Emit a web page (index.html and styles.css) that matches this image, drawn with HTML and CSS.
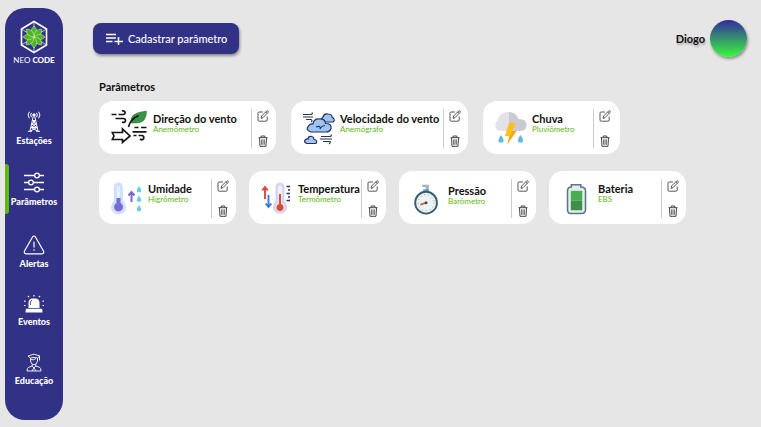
FILE: index.html
```html
<!DOCTYPE html>
<html lang="pt-BR">
<head>
<meta charset="utf-8">
<meta name="viewport" content="width=device-width, initial-scale=1">
<title>Neo Code - Parâmetros</title>
<link rel="stylesheet" href="styles.css">
</head>
<body>
<svg class="sprite" aria-hidden="true">
  <symbol id="edit" viewBox="0 0 12 12">
    <path d="M6 2H2.200Q1 2 1 3.200V10Q1 11.200 2.200 11.200H9Q10.200 11.200 10.200 10V6.500M4 8.400L4.600 6L9.600 1Q10.300.4 11 1.100Q11.700 1.800 11 2.500L6.100 7.600ZM8.700 1.900L10.200 3.400" fill="none" stroke="currentColor" stroke-width=".9"/>
  </symbol>
  <symbol id="trash" viewBox="0 0 12 12">
    <path d="M1.500 2.700H10.500M4.200 2.500V1H7.800V2.500M2.500 3L3 11.300H9L9.500 3" fill="none" stroke="currentColor" stroke-width="1"/>
    <path d="M4.600 4.400V9.800M6 4.400V9.800M7.400 4.400V9.800" stroke="currentColor" stroke-width=".8"/>
  </symbol>
</svg>
<div class="app">
  <aside class="sidebar">
    <a class="brand" href="#">
      <svg width="30" height="34" viewBox="0 0 30 34" aria-hidden="true">
        <path d="M15 1.500L27.500 9V25L15 32.500L2.500 25V9Z" fill="none" stroke="#fff" stroke-width="1.600"/>
        <path d="M15 2V32M2.500 9L27.500 25M27.500 9L2.500 25" stroke="#fff" stroke-width=".7"/>
        <g fill="#4fb51c" stroke="#e4f5dc" stroke-width=".5">
          <path id="petal" d="M15 17Q9.500 11 15 6Q20.500 11 15 17Z"/>
          <use href="#petal" transform="rotate(45 15 17)"/>
          <use href="#petal" transform="rotate(90 15 17)"/>
          <use href="#petal" transform="rotate(135 15 17)"/>
          <use href="#petal" transform="rotate(180 15 17)"/>
          <use href="#petal" transform="rotate(225 15 17)"/>
          <use href="#petal" transform="rotate(270 15 17)"/>
          <use href="#petal" transform="rotate(315 15 17)"/>
        </g>
      </svg>
      <span class="brand-name">NEO <b>CODE</b></span>
    </a>
    <nav class="menu">
      <a class="menu-item" href="#">
        <svg width="16" height="21" viewBox="0 0 16 21" fill="none" stroke="#fff" aria-hidden="true">
          <circle cx="8" cy="4" r="1.200" fill="#fff"/>
          <path d="M5.500 6.200Q3.800 4 5.500 1.800M10.500 6.200Q12.200 4 10.500 1.800M3.400 7.300Q.7 4 3.400.7M12.600 7.300Q15.300 4 12.600.7" stroke-width="1"/>
          <path d="M7.200 5.500L4 20M8.800 5.500L12 20M2 20.300H6M10 20.300H14M6.500 9.500H9.500M5.800 13H10.200M5 16.500H11M6.500 9.500L10.200 13L5 16.500L11.500 20M9.500 9.500L5.800 13L11 16.500L4.500 20" stroke-width="1"/>
        </svg>
        <span>Estações</span>
      </a>
      <a class="menu-item active" href="#" aria-current="page">
        <svg width="22" height="21" viewBox="0 0 22 21" fill="none" stroke="#fff" stroke-width="1.300" aria-hidden="true">
          <path d="M1 3.500H11.500M16.500 3.500H21M1 10.500H5.500M10.500 10.500H21M1 17.500H11.500M16.500 17.500H21"/>
          <circle cx="14" cy="3.500" r="2.400"/><circle cx="8" cy="10.500" r="2.400"/><circle cx="14" cy="17.500" r="2.400"/>
        </svg>
        <span>Parâmetros</span>
      </a>
      <a class="menu-item" href="#">
        <svg width="22" height="22" viewBox="0 0 22 22" fill="none" stroke="#fff" stroke-width="1.200" stroke-linejoin="round" aria-hidden="true">
          <path d="M9.400 4.200Q11 1.800 12.600 4.200L20.500 18Q21.400 20.600 18.800 20.800H3.200Q.6 20.600 1.500 18Z"/>
          <path d="M11 8.800V14.500M11 16.300V17.700"/>
        </svg>
        <span>Alertas</span>
      </a>
      <a class="menu-item" href="#">
        <svg width="22" height="18" viewBox="0 0 22 18" aria-hidden="true">
          <path d="M5.500 13V7.500Q6 3.500 9.500 3.500H12.500Q16 3.500 16.500 7.500V13ZM3.500 13.800H18.500Q19.500 14 19.500 17.500H2.500Q2.500 14 3.500 13.800Z" fill="#fff"/>
          <path d="M7.500 10V7.500Q7.500 5.500 9 5.300" fill="none" stroke="#313186" stroke-width=".8"/>
          <path d="M11 0V1.500M5 1L6 2.200M17 1L16 2.200M1 6L2.500 6.400M21 6L19.500 6.400M1 10.500H2.500M19.500 10.500H21" stroke="#fff" stroke-width="1.200"/>
        </svg>
        <span>Eventos</span>
      </a>
      <a class="menu-item" href="#">
        <svg width="16" height="19" viewBox="0 0 16 19" fill="none" stroke="#fff" stroke-width=".9" aria-hidden="true">
          <path d="M2 3L8 1.200L14 3L11.500 5Q8 3.800 4.500 5ZM13.500 3V7.500M4.500 5V8Q5 11.500 8 11.800Q11 11.500 11.500 8V5M4.500 6.500Q8 7.500 10 5.500M6.200 11.300V13L8 15L9.800 13V11.300M6.200 13L2.500 14.300Q1 15 1 18H15Q15 15 13.500 14.300L9.800 13M6 18L8 15L10 18"/>
        </svg>
        <span>Educação</span>
      </a>
    </nav>
  </aside>

  <main class="content">
    <header class="topbar">
      <button class="add" type="button">
        <svg width="17" height="13" viewBox="0 0 17 13" fill="none" stroke="#fff" stroke-width="1.500" aria-hidden="true">
          <path d="M0 2.500H10M0 6H10M0 9.500H6.500M12.500 5V13M8.500 9.500H17"/>
        </svg>
        Cadastrar parâmetro
      </button>
      <div class="user"><span>Diogo</span><div class="avatar"></div></div>
    </header>

    <section class="params">
      <h1>Parâmetros</h1>
      <div class="row row-wide">
        <article class="card wide">
          <svg class="art art-wide" viewBox="0 0 36 36" fill="none" stroke="#151515" stroke-width="1.700" aria-hidden="true">
            <path d="M0 5.500H5M7 5.500H12Q14 5 13.500 3Q12.500 1.200 10.500 2M4 9.500H12Q14.500 10 13.800 12.500Q12.500 14 10.500 13"/>
            <path d="M20 14Q16.500 4 35 2Q35 14 25 14Z" fill="#369442" stroke="#27733a" stroke-width=".5"/>
            <path d="M17 18Q19 10 27 6.500"/>
            <path d="M.8 23.500H11V20L18.500 27L11 33.500V30.500H.8L2.500 27Z"/>
            <path d="M23 18.500H27M29.500 18.500H35M21 22.800H35M22 26.500H25M27 26.500H30.500Q33 27 32 30Q30.500 31.500 28.500 30"/>
          </svg>
          <div class="info"><h2>Direção do vento</h2><p>Anemômetro</p></div>
          <div class="actions">
            <button type="button" aria-label="Editar Direção do vento"><svg><use href="#edit"/></svg></button>
            <button type="button" aria-label="Excluir Direção do vento"><svg><use href="#trash"/></svg></button>
          </div>
        </article>
        <article class="card wide">
          <svg class="art" viewBox="0 0 32 36" stroke="#26344b" stroke-width="1.200" aria-hidden="true">
            <path d="M22 13Q17 10 20 8Q21 4 25 5Q29 5 29 8Q33 11 30 13Z" fill="#9dc5fb"/>
            <path d="M8 23Q2 21 5.500 17Q7 14.500 10 15Q11 9.500 16 10Q22 9.500 22.500 14.500Q29 14.500 28 19.500Q27 23 23 23Z" fill="#9dc5fb"/>
            <path d="M4 34.500Q0 33 2.500 30.500Q4 29.500 5 30Q5.500 26.500 9 27.500Q11 28 11 30.500Q15 31 13 34.500Z" fill="#9dc5fb"/>
            <path d="M0 5.500H8Q10 5 9 3.500M0 8H10M3 10.500H8Q10 11.500 8 13M18 27.500H27Q29 27 28 25.500M17 30H29M20 32.500H27Q28 33.500 26 35M13 18Q18 16 17 20Q18 17 22 16.500" fill="none"/>
          </svg>
          <div class="info"><h2>Velocidade do vento</h2><p>Anemógrafo</p></div>
          <div class="actions">
            <button type="button" aria-label="Editar Velocidade do vento"><svg><use href="#edit"/></svg></button>
            <button type="button" aria-label="Excluir Velocidade do vento"><svg><use href="#trash"/></svg></button>
          </div>
        </article>
        <article class="card card-near">
          <svg class="art" viewBox="0 0 32 36" aria-hidden="true">
            <path d="M5.500 22A6 6 0 0 1 3 11Q4 3.500 12.500 3Q21 3 23.500 10Q31.500 10 31.500 16Q31.500 21 26 22Z" fill="#e3e2e8"/>
            <path d="M14 3Q21 3.500 23.500 10Q31.500 10 31.500 16Q31.500 21 26 22H14Z" fill="#cbcad2"/>
            <path d="M14 14H21L17 22H21.500L12.500 35L14.500 27H10Z" fill="#ffc017"/>
            <path d="M17 22H21.500L12.500 35L14.500 27H15.500Z" fill="#f6a719"/>
            <path d="M6 26Q2 31.500 4 33Q6 34.500 8 33Q10 31.500 6 26ZM25.500 26Q21.500 31.500 23.500 33Q25.500 34.500 27.500 33Q29.500 31.500 25.500 26Z" fill="#62b9e8"/>
          </svg>
          <div class="info"><h2>Chuva</h2><p>Pluviômetro</p></div>
          <div class="actions">
            <button type="button" aria-label="Editar Chuva"><svg><use href="#edit"/></svg></button>
            <button type="button" aria-label="Excluir Chuva"><svg><use href="#trash"/></svg></button>
          </div>
        </article>
      </div>
      <div class="row">
        <article class="card">
          <svg class="art" viewBox="0 0 32 36" aria-hidden="true">
            <path d="M3 8A4.500 4.500 0 0 1 12 8V22A7.500 7.500 0 1 1 3 22Z" fill="#cfe1ff"/>
            <path d="M6 8Q7.500 6 9 8V19H6Z" fill="#e6f2ff"/>
            <path d="M5.500 19H9.500V24A4.500 4.500 0 1 1 5.500 24Z" fill="#7a6ad3"/>
            <path d="M20.500 23V14M17.500 16.500L20.500 13L23.500 16.500" fill="none" stroke="#7a67cf" stroke-width="2"/>
            <g fill="#6ccdf0"><path id="drop" d="M28 7Q23.500 13 28 13.500Q32.500 13 28 7Z"/><use href="#drop" y="9.500"/><use href="#drop" y="19"/></g>
          </svg>
          <div class="info"><h2>Umidade</h2><p>Higrômetro</p></div>
          <div class="actions">
            <button type="button" aria-label="Editar Umidade"><svg><use href="#edit"/></svg></button>
            <button type="button" aria-label="Excluir Umidade"><svg><use href="#trash"/></svg></button>
          </div>
        </article>
        <article class="card">
          <svg class="art" viewBox="0 0 32 36" aria-hidden="true">
            <path d="M4 20V9M1.200 11.500L4 8L6.800 11.500" fill="none" stroke="#dc4938" stroke-width="1.900"/>
            <path d="M7.500 16V27M4.700 24.500L7.500 28L10.300 24.500" fill="none" stroke="#3e78e5" stroke-width="1.900"/>
            <path d="M14.500 8A4.500 4.500 0 0 1 23.500 8V22.500A7 7 0 1 1 14.500 22.500Z" fill="#d7d6eb"/>
            <path d="M17 8Q19 5 21 8V24A4.500 4.500 0 1 1 17 24Z" fill="#f3f1fa"/>
            <path d="M18 15H20V25A3.600 3.600 0 1 1 18 25Z" fill="#dc4938"/>
            <path d="M25.500 7.500H29M27 11H29M25.500 14.500H29M27 18H29M25.500 21.500H29" stroke="#343164" stroke-width="1.500"/>
          </svg>
          <div class="info"><h2>Temperatura</h2><p>Termômetro</p></div>
          <div class="actions">
            <button type="button" aria-label="Editar Temperatura"><svg><use href="#edit"/></svg></button>
            <button type="button" aria-label="Excluir Temperatura"><svg><use href="#trash"/></svg></button>
          </div>
        </article>
        <article class="card card-low">
          <svg class="art" viewBox="0 0 32 38" aria-hidden="true">
            <path d="M11 6H18V14H14.500V8.500H11Z" fill="#a7b3bc"/><path d="M12 11H18V14H12Z" fill="#4c9fc6"/>
            <circle cx="15" cy="25" r="11.500" fill="#edf2f3" stroke="#385d72" stroke-width="2"/>
            <circle cx="15" cy="25" r="8.500" fill="none" stroke="#8b999e" stroke-dasharray="1 3.200"/>
            <path d="M15 25L9 27" stroke="#e55344" stroke-width="1.800"/><circle cx="15" cy="25" r="1.600" fill="#36546a"/>
          </svg>
          <div class="info"><h2>Pressão</h2><p>Barômetro</p></div>
          <div class="actions">
            <button type="button" aria-label="Editar Pressão"><svg><use href="#edit"/></svg></button>
            <button type="button" aria-label="Excluir Pressão"><svg><use href="#trash"/></svg></button>
          </div>
        </article>
        <article class="card">
          <svg class="art" viewBox="0 0 32 38" aria-hidden="true">
            <path d="M10 8.500V6H20V8.500Q25 8.500 25 12.500V32Q25 36.500 21 36.500H9Q6 36.500 6 32V12.500Q6 8.500 10 8.500Z" fill="#e3ebed" stroke="#56758a" stroke-width="1.600"/>
            <path d="M9.500 12.500H21.500V23H9.500Z" fill="#49ad51"/><path d="M9.500 23H21.500V33H9.500Z" fill="#3e9047"/>
          </svg>
          <div class="info"><h2>Bateria</h2><p>EBS</p></div>
          <div class="actions">
            <button type="button" aria-label="Editar Bateria"><svg><use href="#edit"/></svg></button>
            <button type="button" aria-label="Excluir Bateria"><svg><use href="#trash"/></svg></button>
          </div>
        </article>
      </div>
    </section>
  </main>
</div>
</body>
</html>
```
FILE: styles.css
```css
* { box-sizing: border-box; }
body {
  margin: 0;
  background: #e6e6e6;
  color: #111;
  font-family: Lato, "Open Sans", sans-serif;
  font-size: 11px;
  line-height: 12px;
}
h1, h2, p { margin: 0; font-size: inherit; }
button { font: inherit; border: 0; cursor: pointer; }
a { color: inherit; text-decoration: none; }
svg { display: block; flex: none; }
.sprite { position: absolute; width: 0; height: 0; }

.app { display: flex; min-height: 100vh; padding: 8px 14px 7px 5px; }
.sidebar {
  flex: none;
  width: 58px;
  padding-top: 12px;
  border-radius: 20px;
  background: #313186;
  color: #fff;
}
.brand { display: flex; flex-direction: column; align-items: center; font-size: 8px; }
.brand-name { white-space: nowrap; }
.brand-name b { font-weight: 900; }
.menu { display: flex; flex-direction: column; gap: 25px; margin-top: 45px; }
.menu-item {
  position: relative;
  display: flex;
  flex-direction: column;
  align-items: center;
  gap: 3px;
  font-size: 9px;
  font-weight: 900;
}
.active::before {
  content: "";
  position: absolute;
  left: 0;
  top: -8px;
  width: 4px;
  height: 50px;
  border-radius: 0 3px 3px 0;
  background: #60b80f;
}

.content { flex: 1; min-width: 0; padding: 12px 0 0 30px; }
.topbar { display: flex; align-items: center; justify-content: space-between; }
.add {
  display: flex;
  align-items: center;
  gap: 5px;
  height: 31px;
  padding: 0 12px 0 13px;
  border-radius: 8px;
  background: #313186;
  color: #fff;
  font-weight: 500;
  box-shadow: 1px 2px 3px #0006;
}
.user {
  display: flex;
  align-items: center;
  gap: 5px;
  font-weight: 700;
  text-shadow: 1px 2px 2px #0004;
}
.avatar {
  width: 37px;
  height: 37px;
  border-radius: 50%;
  background: linear-gradient(#3329a0, #38fa3b);
  box-shadow: 1px 2px 3px #0006;
}

.params { padding: 24px 0 0 6px; }
.params h1 { font-weight: 700; }
.row { display: flex; flex-wrap: wrap; gap: 13px; margin-top: 17px; }
.row-wide { gap: 15px; margin-top: 8px; }
.card {
  display: flex;
  width: 137px;
  height: 53px;
  padding: 8px 0 6px 12px;
  border-radius: 14px;
  background: #fff;
}
.wide { width: 177px; }
.card-near { padding-right: 2px; }
.art { width: 32px; height: 36px; }
.art-wide { width: 37px; }
.info { flex: 1; min-width: 0; padding: 4px 0 0 5px; white-space: nowrap; }
.card-low .info { padding-top: 6px; }
.info h2 { font-weight: 700; }
.info p { color: #60b80f; font-size: 8px; line-height: 9px; }
.actions {
  flex: none;
  display: flex;
  flex-direction: column;
  align-items: center;
  justify-content: space-between;
  width: 25px;
  padding-right: 2px;
  border-left: 1px solid #ccc;
}
.actions button { padding: 1px; background: none; color: #444; }
.actions svg { width: 12px; height: 12px; }
```
